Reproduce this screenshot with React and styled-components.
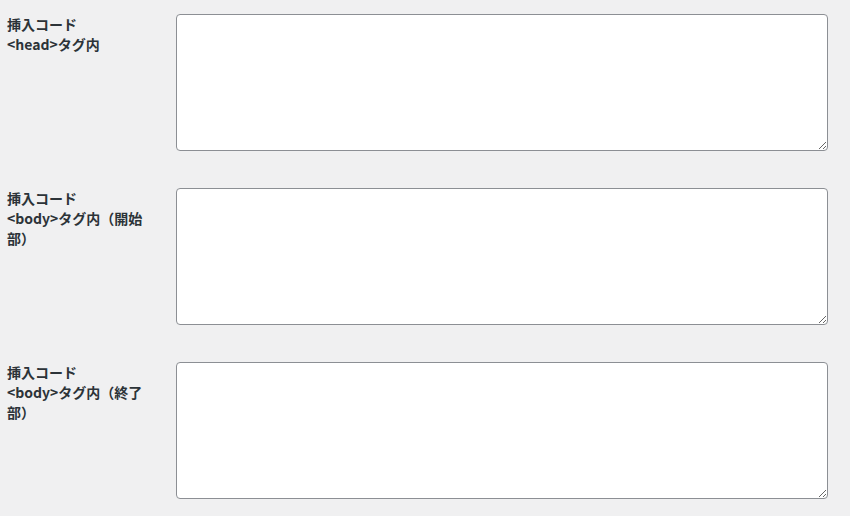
import React from "react";
import styled, { createGlobalStyle } from "styled-components";

const GlobalStyle = createGlobalStyle`
  html, body {
    margin: 0;
    padding: 0;
    background: #f0f0f1;
  }
  body {
    font-family: "Noto Sans CJK JP", "Noto Sans", sans-serif;
    color: #1d2327;
  }
`;

const FormTable = styled.div`
  display: flex;
  flex-direction: column;
  gap: 37px;
  padding: 14px 22px 18px 7px;
`;

const Row = styled.div`
  display: grid;
  grid-template-columns: 169px 1fr;
  align-items: start;
`;

const Label = styled.label`
  font-size: 14px;
  font-weight: 700;
  line-height: 20px;
  padding-right: 22px;
  padding-top: 0;
  color: #2c3338;
`;

const CodeArea = styled.textarea`
  display: block;
  box-sizing: border-box;
  width: 100%;
  height: 137px;
  margin: 0;
  background: #fff;
  border: 1px solid #8c8f94;
  border-radius: 4px;
  font-family: "Liberation Mono", monospace;
  font-size: 13px;
  padding: 4px 8px;
  color: #2c3338;
  resize: vertical;
  outline: none;
`;

const fields = [
  { id: "head", lines: ["挿入コード", "<head>タグ内"] },
  { id: "body-start", lines: ["挿入コード", "<body>タグ内（開始部）"] },
  { id: "body-end", lines: ["挿入コード", "<body>タグ内（終了部）"] },
];

export default function App() {
  return (
    <>
      <GlobalStyle />
      <FormTable>
        {fields.map((f) => (
          <Row key={f.id}>
            <Label htmlFor={f.id}>
              {f.lines[0]}
              <br />
              {f.lines[1]}
            </Label>
            <CodeArea id={f.id} />
          </Row>
        ))}
      </FormTable>
    </>
  );
}
